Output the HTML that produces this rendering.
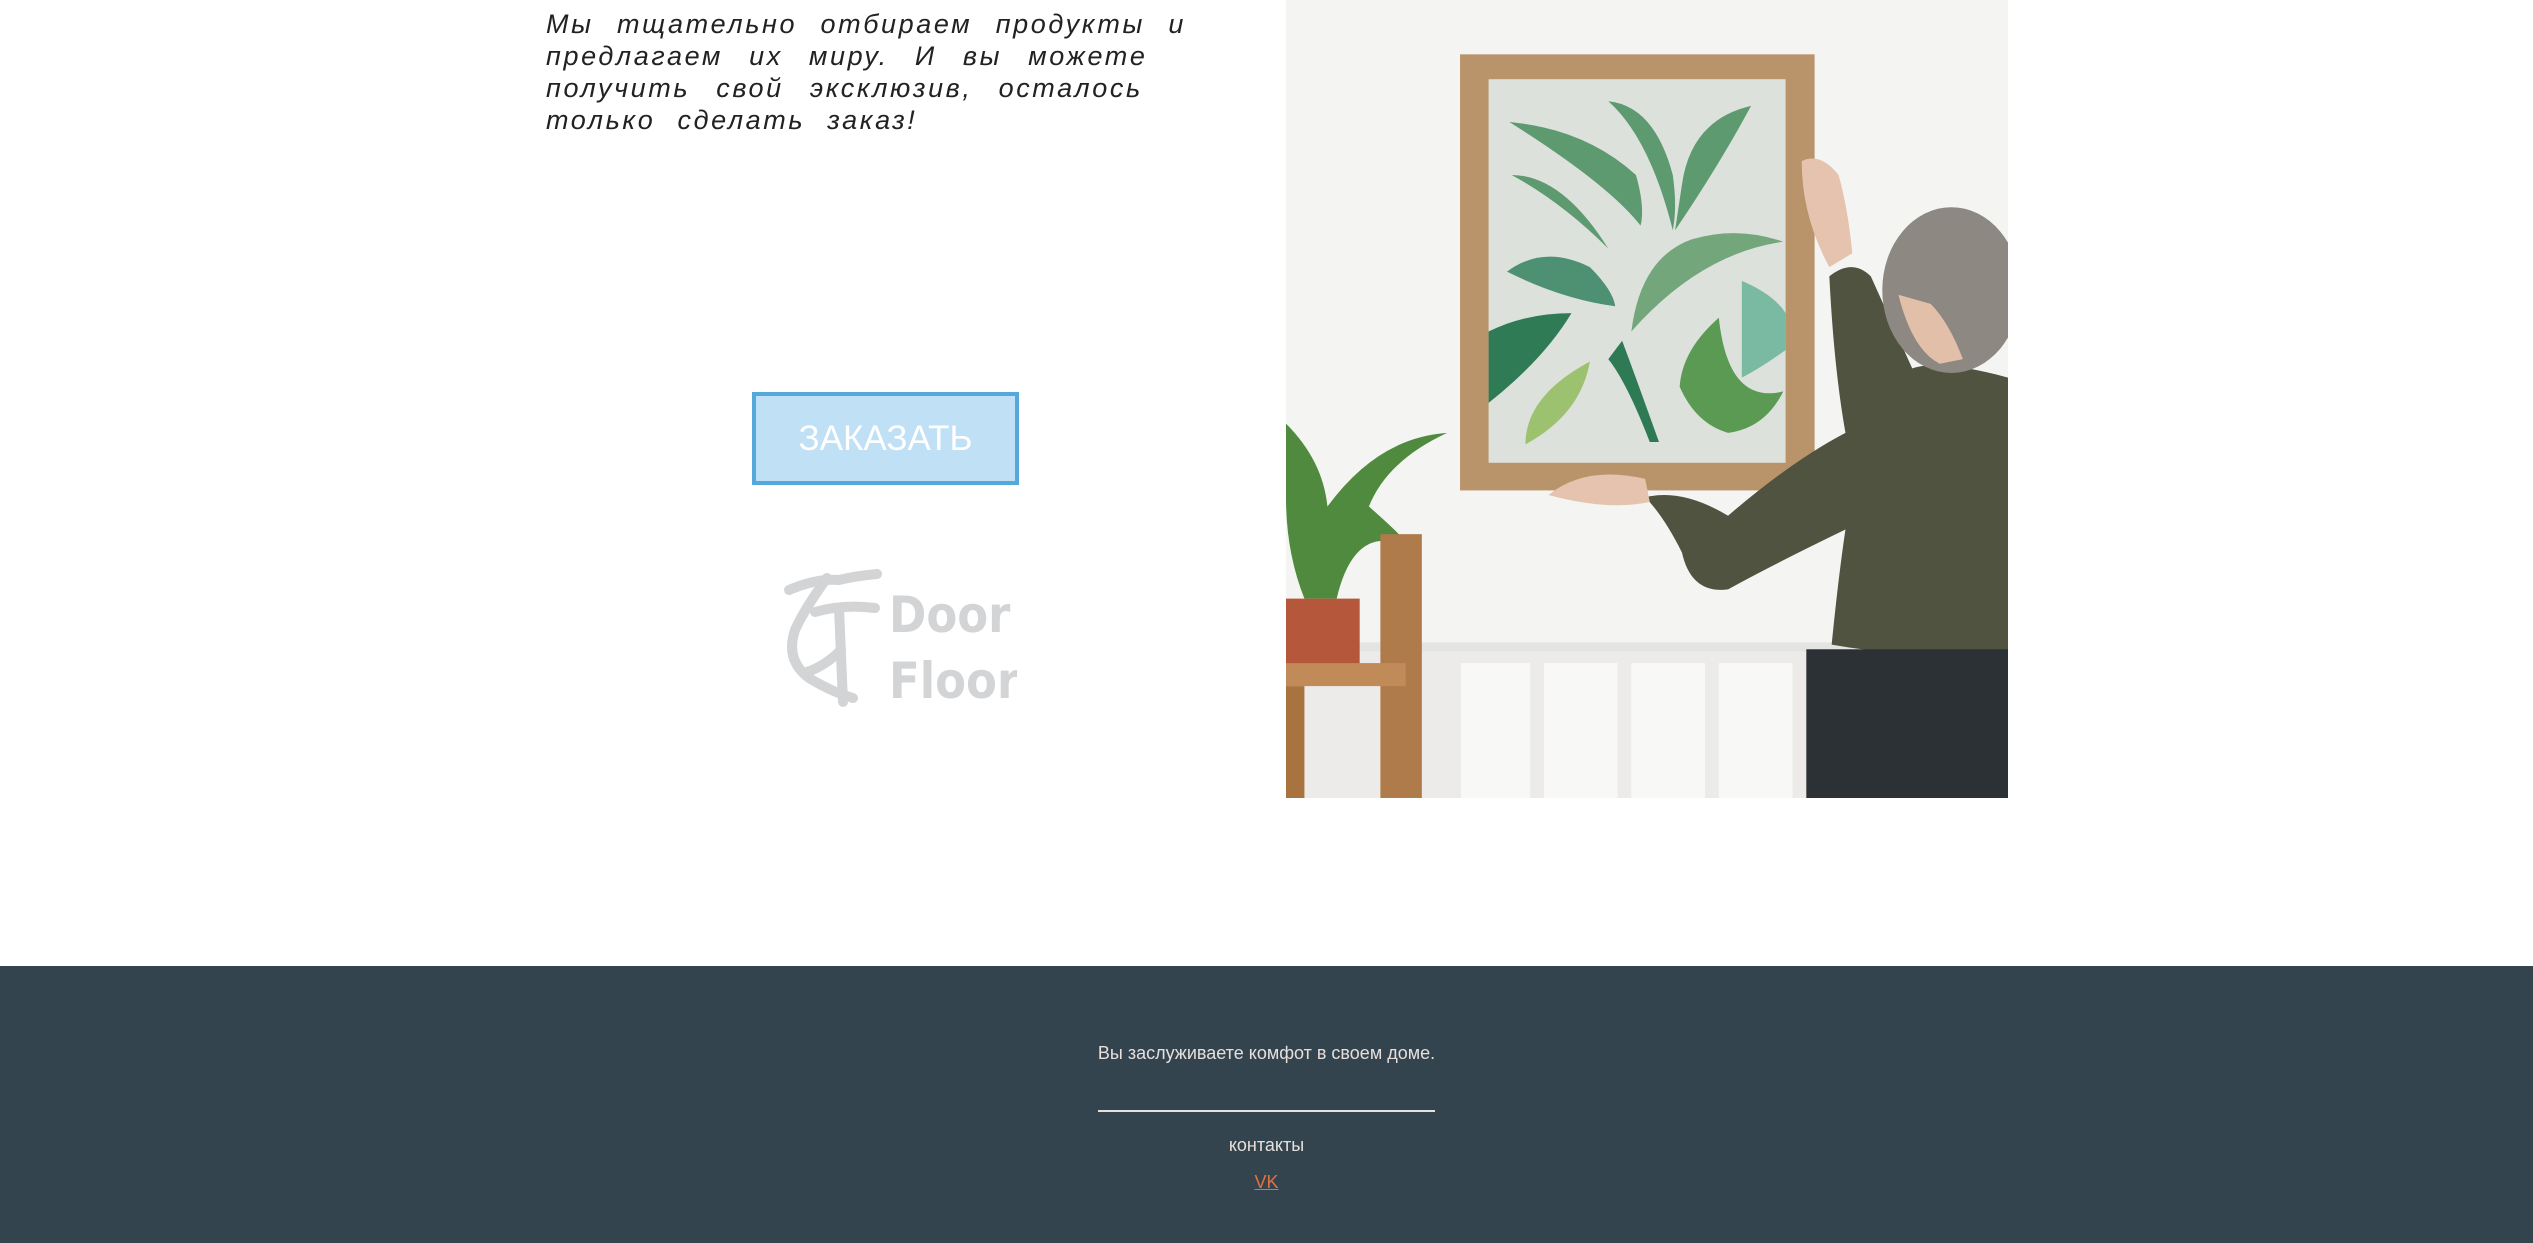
<!DOCTYPE html>
<html><head><meta charset="utf-8"><style>
html,body{margin:0;padding:0;background:#fff;}
body{width:2533px;height:1243px;position:relative;overflow:hidden;font-family:"Liberation Sans",sans-serif;}
.txt{position:absolute;left:546px;top:8px;width:640px;font-size:27px;line-height:32px;font-style:italic;color:#222;letter-spacing:2.6px;word-spacing:10px;}
.txt div{white-space:nowrap;}
.j{text-align:justify;text-align-last:justify;}
.btn{position:absolute;left:752px;top:392px;width:259px;height:85px;border:4px solid #55a8dc;background:#bfe0f5;color:#fff;font-size:35px;text-align:center;line-height:85px;}
.logo{position:absolute;left:777px;top:568px;}
.img{position:absolute;left:1286px;top:0;width:722px;height:798px;}
.foot{position:absolute;left:0;top:966px;width:2533px;height:277px;background:#34444f;color:#e6e0dc;}
.f1{position:absolute;left:0;width:2533px;text-align:center;top:77px;font-size:18px;}
.line{position:absolute;left:1098px;width:337px;top:144px;height:2px;background:#e6e0dc;}
.f2{position:absolute;left:0;width:2533px;text-align:center;top:169px;font-size:18px;}
.f3{position:absolute;left:0;width:2533px;text-align:center;top:206px;font-size:18px;color:#e5703f;text-decoration:underline;}
</style></head><body>
<div class="txt">
<div class="j">Мы тщательно отбираем продукты и</div>
<div style="word-spacing:16px">предлагаем их миру. И вы можете</div>
<div style="word-spacing:16px">получить свой эксклюзив, осталось</div>
<div style="word-spacing:12px">только сделать заказ!</div>
</div>
<div class="btn">ЗАКАЗАТЬ</div>
<svg class="logo" width="240" height="140" viewBox="0 0 240 140">
<g fill="none" stroke="#d3d4d6" stroke-width="10" stroke-linecap="round" stroke-linejoin="round">
<path d="M12 22 Q40 10 62 12 Q78 8 100 6"/>
<path d="M50 10 Q28 40 18 62 Q8 92 32 110 Q55 124 76 130"/>
<path d="M38 44 Q66 36 98 40"/>
<path d="M62 40 L66 134"/>
<path d="M64 82 Q48 98 30 104"/>
</g>
<text x="112" y="64" font-family="DejaVu Sans Condensed, DejaVu Sans, sans-serif" font-weight="bold" font-size="50" fill="#d3d4d6">Door</text>
<text x="112" y="130" font-family="DejaVu Sans Condensed, DejaVu Sans, sans-serif" font-weight="bold" font-size="50" fill="#d3d4d6">Floor</text>
</svg>
<svg class="img" viewBox="0 0 1568 1733" preserveAspectRatio="none">
<rect width="1568" height="1733" fill="#f4f4f2"/>
<rect x="0" y="1395" width="1568" height="20" fill="#e4e4e2"/>
<rect x="0" y="1415" width="1568" height="318" fill="#ecebe9"/>
<g fill="#f8f8f6"><rect x="380" y="1440" width="150" height="293"/><rect x="560" y="1440" width="160" height="293"/><rect x="750" y="1440" width="160" height="293"/><rect x="940" y="1440" width="160" height="293"/></g>
<rect x="378" y="118" width="770" height="947" fill="#b9946a"/>
<rect x="440" y="172" width="645" height="833" fill="#dde1dc"/>
<g fill="#5e9a70">
<path d="M485 265 Q650 280 760 380 Q780 450 770 490 Q700 400 485 265Z"/>
<path d="M490 380 Q600 380 700 540 Q600 440 490 380Z"/>
<path d="M700 220 Q800 230 840 380 Q850 450 840 500 Q790 300 700 220Z"/>
<path d="M1010 230 Q880 260 860 400 L845 500 Q940 360 1010 230Z"/>
<path d="M480 590 Q560 530 660 580 Q710 630 715 665 Q600 650 480 590Z" fill="#4d9072"/>
<path d="M750 720 Q770 560 880 520 Q980 490 1080 525 Q900 550 750 720Z" fill="#73a67a"/>
<path d="M440 720 Q520 680 620 680 Q560 780 440 875Z" fill="#2f7b56"/>
<path d="M520 965 Q520 860 660 785 Q640 900 520 965Z" fill="#9cc270"/>
<path d="M940 690 Q860 760 855 840 Q890 920 960 940 Q1040 930 1080 850 Q960 880 940 690Z" fill="#5a9a52"/>
<path d="M990 610 Q1060 640 1085 680 L1085 760 Q1030 800 990 820Z" fill="#7ab9a2"/>
<path d="M730 740 Q760 820 810 960 L790 960 Q740 830 700 780Z" fill="#2e7a55"/>
</g>
<path d="M1180 600 Q1230 560 1270 600 L1360 800 Q1420 780 1568 820 L1568 1420 Q1350 1430 1185 1400 Q1200 1250 1215 1150 Q1050 1230 960 1280 Q880 1290 860 1200 Q820 1120 780 1080 Q860 1060 960 1120 Q1100 1000 1215 940 Q1190 800 1180 600Z" fill="#4f533f"/>
<path d="M1120 350 Q1160 330 1200 380 Q1220 450 1230 550 L1180 580 Q1120 470 1120 350Z" fill="#e6c3ae"/>
<path d="M570 1075 Q650 1010 780 1040 L790 1090 Q700 1110 570 1075Z" fill="#e6c3ae"/>
<ellipse cx="1445" cy="630" rx="150" ry="180" fill="#8d8882"/>
<path d="M1330 640 Q1360 760 1420 790 L1470 780 Q1440 700 1400 660Z" fill="#e2bfa9"/>
<rect x="1130" y="1410" width="438" height="323" fill="#2c3136"/>
<path d="M0 920 Q80 1000 90 1100 Q200 950 350 940 Q220 1000 180 1100 Q260 1170 270 1190 Q150 1130 110 1300 L40 1300 Q0 1200 0 1080Z" fill="#4f8a3e"/>
<rect x="205" y="1160" width="90" height="573" fill="#b07b4a"/>
<rect x="0" y="1300" width="160" height="150" fill="#b5573b"/>
<rect x="0" y="1440" width="260" height="50" fill="#c08b58"/>
<rect x="0" y="1490" width="40" height="243" fill="#a8733f"/>
</svg>
<div class="foot">
<div class="f1">Вы заслуживаете комфот в своем доме.</div>
<div class="line"></div>
<div class="f2">контакты</div>
<div class="f3">VK</div>
</div>
</body></html>
